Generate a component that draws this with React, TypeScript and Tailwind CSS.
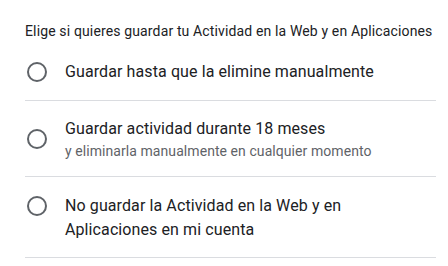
import React from "react";

function Radio() {
  return (
    <span className="ml-[2px] block h-[20px] w-[20px] shrink-0 rounded-full border-2 border-[#5f6368] box-border" />
  );
}

export default function App() {
  return (
    <div
      className="w-[448px] h-[266px] bg-white overflow-hidden"
      style={{ fontFamily: "Roboto, 'Liberation Sans', sans-serif" }}
    >
      <div className="ml-[25px] w-[411px] pt-[21px]">
        <div className="text-[14px] leading-[20px] tracking-[0.14px] text-[#202124] mb-[3px] whitespace-nowrap">
          Elige si quieres guardar tu Actividad en la Web y en Aplicaciones
        </div>

        <div className="flex items-center py-4 border-b border-[#dadce0]">
          <Radio />
          <div className="ml-[18px] text-[16px] leading-[24px] tracking-[0.1px] text-[#202124]">
            Guardar hasta que la elimine manualmente
          </div>
        </div>

        <div className="flex items-center pt-4 pb-[15px] border-b border-[#dadce0]">
          <Radio />
          <div className="ml-[18px] flex flex-col">
            <span className="text-[16px] leading-[24px] tracking-[0.1px] text-[#202124]">
              Guardar actividad durante 18 meses
            </span>
            <span className="text-[14px] leading-[20px] tracking-[0.07px] text-[#5f6368]">
              y eliminarla manualmente en cualquier momento
            </span>
          </div>
        </div>

        <div className="flex items-start pt-[17px] pb-[15px] border-b border-[#dadce0]">
          <div className="h-[24px] flex items-center">
            <Radio />
          </div>
          <div className="ml-[18px] text-[16px] leading-[24px] tracking-[0.1px] text-[#202124] w-[300px]">
            No guardar la Actividad en la Web y en Aplicaciones en mi cuenta
          </div>
        </div>
      </div>
    </div>
  );
}
